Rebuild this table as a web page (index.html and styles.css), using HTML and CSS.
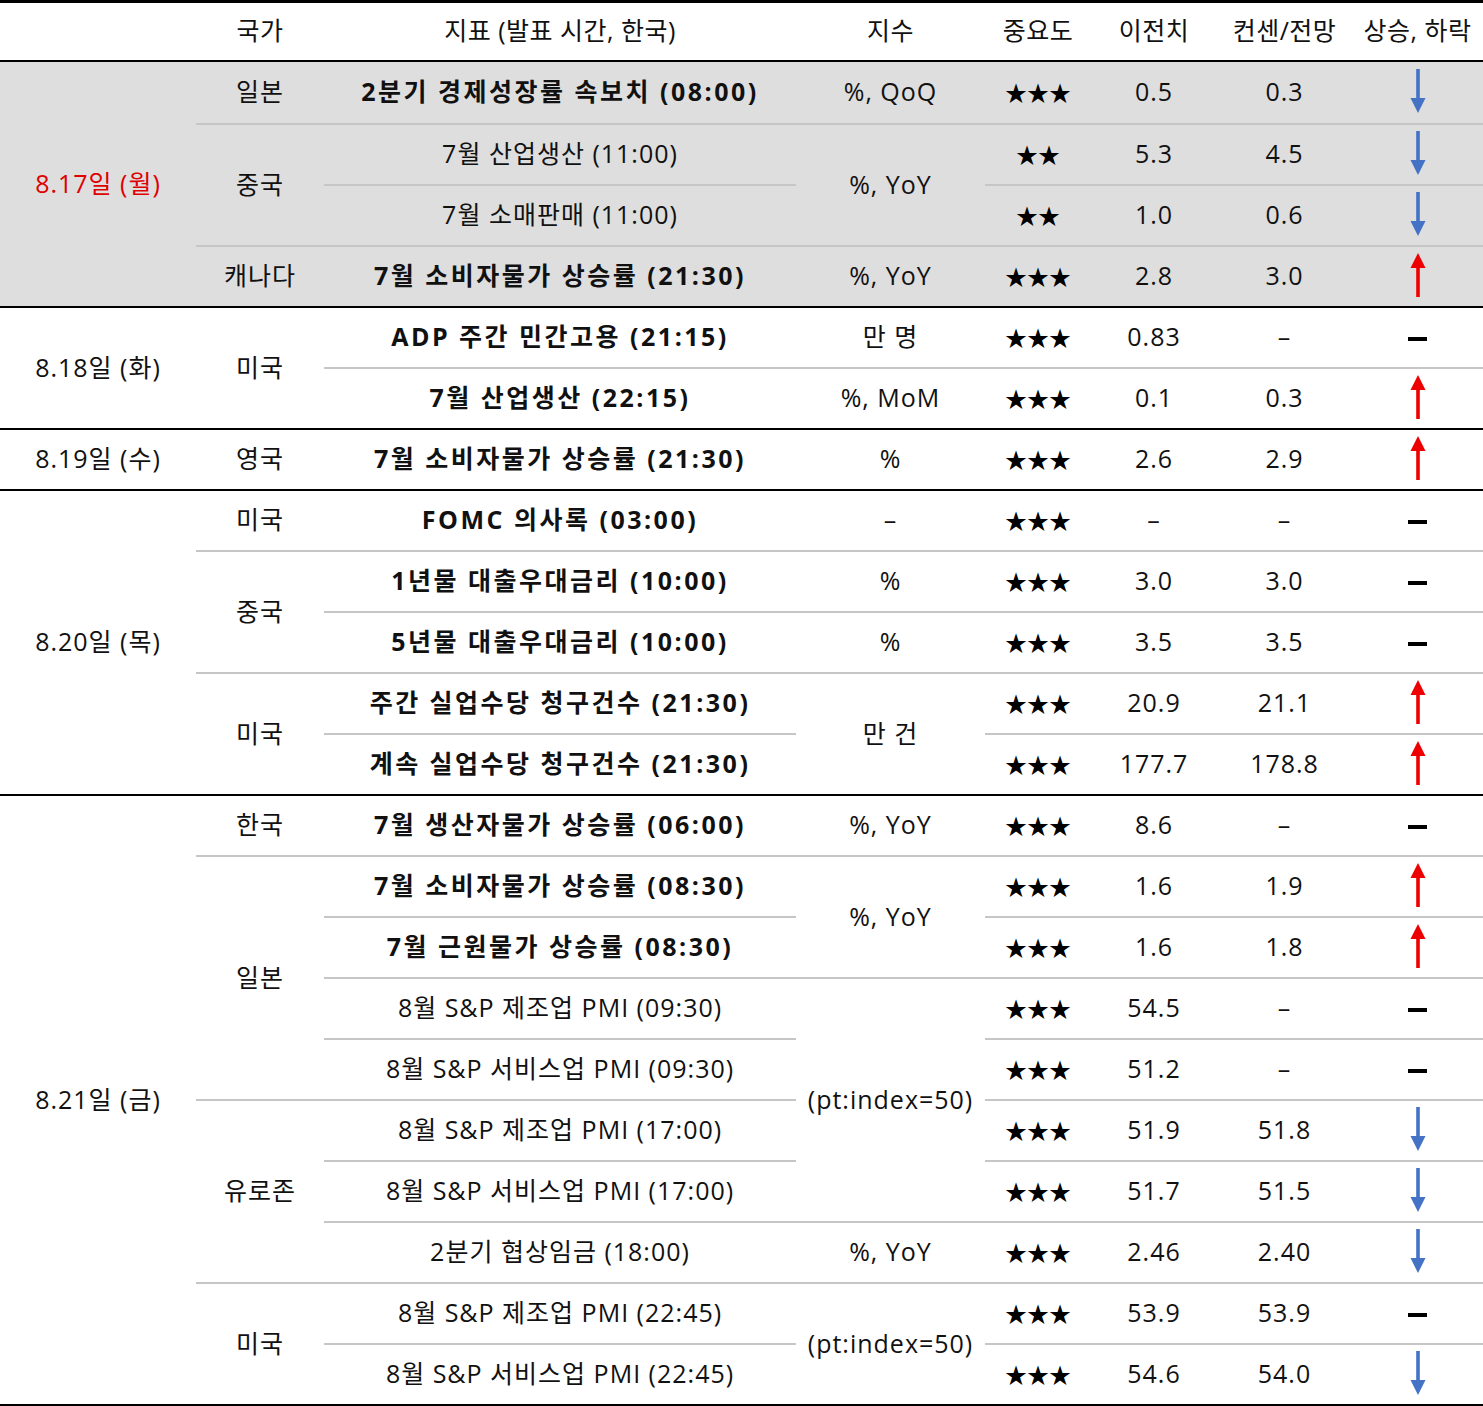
FILE: index.html
```html
<!DOCTYPE html>
<html lang="ko">
<head>
<meta charset="utf-8">
<title>주요 경제지표 일정</title>
<link rel="stylesheet" href="styles.css">
</head>
<body>
<svg class="defs" width="0" height="0" aria-hidden="true">
  <defs>
    <symbol id="dn" viewBox="0 0 20 44">
      <rect x="8.2" y="0" width="3.6" height="31" fill="#4472c4"/>
      <polygon points="2.5,29 17.5,29 10,44" fill="#4472c4"/>
    </symbol>
    <symbol id="up" viewBox="0 0 20 44">
      <rect x="8.2" y="13" width="3.6" height="31" fill="#ee0000"/>
      <polygon points="2.5,15 17.5,15 10,0" fill="#ee0000"/>
    </symbol>
  </defs>
</svg>
<table class="cal">
  <colgroup>
    <col class="c-date"><col class="c-cty"><col class="c-ind"><col class="c-idx"><col class="c-imp"><col class="c-prev"><col class="c-cons"><col class="c-dir">
  </colgroup>
  <thead>
    <tr>
      <th></th><th>국가</th><th>지표 (발표 시간, 한국)</th><th>지수</th><th>중요도</th><th>이전치</th><th>컨센/전망</th><th>상승, 하락</th>
    </tr>
  </thead>
  <tbody>
    <tr class="shade">
      <td rowspan="4" class="red">8.17일 (월)</td>
      <td>일본</td><td class="b">2분기 경제성장률 속보치 (08:00)</td><td>%, QoQ</td><td class="st">★★★</td><td>0.5</td><td>0.3</td>
      <td><svg class="arr"><use href="#dn"/></svg></td>
    </tr>
    <tr class="shade r">
      <td rowspan="2">중국</td><td>7월 산업생산 (11:00)</td><td rowspan="2">%, YoY</td><td class="st">★★</td><td>5.3</td><td>4.5</td>
      <td><svg class="arr"><use href="#dn"/></svg></td>
    </tr>
    <tr class="shade r">
      <td>7월 소매판매 (11:00)</td><td class="st">★★</td><td>1.0</td><td>0.6</td>
      <td><svg class="arr"><use href="#dn"/></svg></td>
    </tr>
    <tr class="shade r">
      <td>캐나다</td><td class="b">7월 소비자물가 상승률 (21:30)</td><td>%, YoY</td><td class="st">★★★</td><td>2.8</td><td>3.0</td>
      <td><svg class="arr"><use href="#up"/></svg></td>
    </tr>

    <tr class="g">
      <td rowspan="2">8.18일 (화)</td><td rowspan="2">미국</td><td class="b">ADP 주간 민간고용 (21:15)</td><td>만 명</td><td class="st">★★★</td><td>0.83</td><td>–</td>
      <td><span class="flat"></span></td>
    </tr>
    <tr class="r">
      <td class="b">7월 산업생산 (22:15)</td><td>%, MoM</td><td class="st">★★★</td><td>0.1</td><td>0.3</td>
      <td><svg class="arr"><use href="#up"/></svg></td>
    </tr>

    <tr class="g">
      <td>8.19일 (수)</td><td>영국</td><td class="b">7월 소비자물가 상승률 (21:30)</td><td>%</td><td class="st">★★★</td><td>2.6</td><td>2.9</td>
      <td><svg class="arr"><use href="#up"/></svg></td>
    </tr>

    <tr class="g">
      <td rowspan="5">8.20일 (목)</td><td>미국</td><td class="b">FOMC 의사록 (03:00)</td><td>–</td><td class="st">★★★</td><td>–</td><td>–</td>
      <td><span class="flat"></span></td>
    </tr>
    <tr class="r">
      <td rowspan="2">중국</td><td class="b">1년물 대출우대금리 (10:00)</td><td>%</td><td class="st">★★★</td><td>3.0</td><td>3.0</td>
      <td><span class="flat"></span></td>
    </tr>
    <tr class="r">
      <td class="b">5년물 대출우대금리 (10:00)</td><td>%</td><td class="st">★★★</td><td>3.5</td><td>3.5</td>
      <td><span class="flat"></span></td>
    </tr>
    <tr class="r">
      <td rowspan="2">미국</td><td class="b">주간 실업수당 청구건수 (21:30)</td><td rowspan="2">만 건</td><td class="st">★★★</td><td>20.9</td><td>21.1</td>
      <td><svg class="arr"><use href="#up"/></svg></td>
    </tr>
    <tr class="r">
      <td class="b">계속 실업수당 청구건수 (21:30)</td><td class="st">★★★</td><td>177.7</td><td>178.8</td>
      <td><svg class="arr"><use href="#up"/></svg></td>
    </tr>

    <tr class="g">
      <td rowspan="10">8.21일 (금)</td><td>한국</td><td class="b">7월 생산자물가 상승률 (06:00)</td><td>%, YoY</td><td class="st">★★★</td><td>8.6</td><td>–</td>
      <td><span class="flat"></span></td>
    </tr>
    <tr class="r">
      <td rowspan="4">일본</td><td class="b">7월 소비자물가 상승률 (08:30)</td><td rowspan="2">%, YoY</td><td class="st">★★★</td><td>1.6</td><td>1.9</td>
      <td><svg class="arr"><use href="#up"/></svg></td>
    </tr>
    <tr class="r">
      <td class="b">7월 근원물가 상승률 (08:30)</td><td class="st">★★★</td><td>1.6</td><td>1.8</td>
      <td><svg class="arr"><use href="#up"/></svg></td>
    </tr>
    <tr class="r">
      <td>8월 S&amp;P 제조업 PMI (09:30)</td><td rowspan="4">(pt:index=50)</td><td class="st">★★★</td><td>54.5</td><td>–</td>
      <td><span class="flat"></span></td>
    </tr>
    <tr class="r">
      <td>8월 S&amp;P 서비스업 PMI (09:30)</td><td class="st">★★★</td><td>51.2</td><td>–</td>
      <td><span class="flat"></span></td>
    </tr>
    <tr class="r">
      <td rowspan="3">유로존</td><td>8월 S&amp;P 제조업 PMI (17:00)</td><td class="st">★★★</td><td>51.9</td><td>51.8</td>
      <td><svg class="arr"><use href="#dn"/></svg></td>
    </tr>
    <tr class="r">
      <td>8월 S&amp;P 서비스업 PMI (17:00)</td><td class="st">★★★</td><td>51.7</td><td>51.5</td>
      <td><svg class="arr"><use href="#dn"/></svg></td>
    </tr>
    <tr class="r">
      <td>2분기 협상임금 (18:00)</td><td>%, YoY</td><td class="st">★★★</td><td>2.46</td><td>2.40</td>
      <td><svg class="arr"><use href="#dn"/></svg></td>
    </tr>
    <tr class="r">
      <td rowspan="2">미국</td><td>8월 S&amp;P 제조업 PMI (22:45)</td><td rowspan="2">(pt:index=50)</td><td class="st">★★★</td><td>53.9</td><td>53.9</td>
      <td><span class="flat"></span></td>
    </tr>
    <tr class="r">
      <td>8월 S&amp;P 서비스업 PMI (22:45)</td><td class="st">★★★</td><td>54.6</td><td>54.0</td>
      <td><svg class="arr"><use href="#dn"/></svg></td>
    </tr>
  </tbody>
</table>
</body>
</html>
```

FILE: styles.css
```css
html, body {
  margin: 0;
  padding: 0;
  background: #ffffff;
}

body {
  font-family: "Open Sans", "Noto Sans CJK KR", sans-serif;
  color: #111111;
}

.defs {
  position: absolute;
  width: 0;
  height: 0;
  overflow: hidden;
}

.cal {
  width: 1483px;
  table-layout: fixed;
  border-collapse: separate;
  border-spacing: 0;
  border-top: 3px solid #000000;
  border-bottom: 2px solid #000000;
}

.c-date { width: 196px; }
.c-cty  { width: 128px; }
.c-ind  { width: 472px; }
.c-idx  { width: 189px; }
.c-imp  { width: 106px; }
.c-prev { width: 126px; }
.c-cons { width: 135px; }
.c-dir  { width: 131px; }

.cal th,
.cal td {
  box-sizing: border-box;
  padding: 0 0 3px 0;
  height: 61px;
  text-align: center;
  vertical-align: middle;
  font-size: 25px;
  font-weight: 400;
  line-height: 1.2;
  letter-spacing: 1px;
  white-space: nowrap;
}

.cal th {
  height: 59px;
  padding: 0 0 4px 0;
  border-bottom: 2px solid #000000;
  letter-spacing: 0.5px;
}

.cal tr.r td {
  border-top: 2px solid #c6c6c6;
}

.cal tr.g td {
  border-top: 2px solid #000000;
}

.cal tr.shade td {
  background: #dedede;
}

.cal td.b {
  font-weight: 700;
  letter-spacing: 2.5px;
}

.cal td.red {
  color: #e00000;
}

.cal td.st {
  font-family: "Noto Sans CJK KR", sans-serif;
  font-size: 22px;
  letter-spacing: 0;
  color: #000000;
}

.arr {
  display: inline-block;
  width: 20px;
  height: 44px;
  vertical-align: middle;
}

.flat {
  display: inline-block;
  width: 19px;
  height: 4px;
  background: #000000;
  vertical-align: middle;
}
```
